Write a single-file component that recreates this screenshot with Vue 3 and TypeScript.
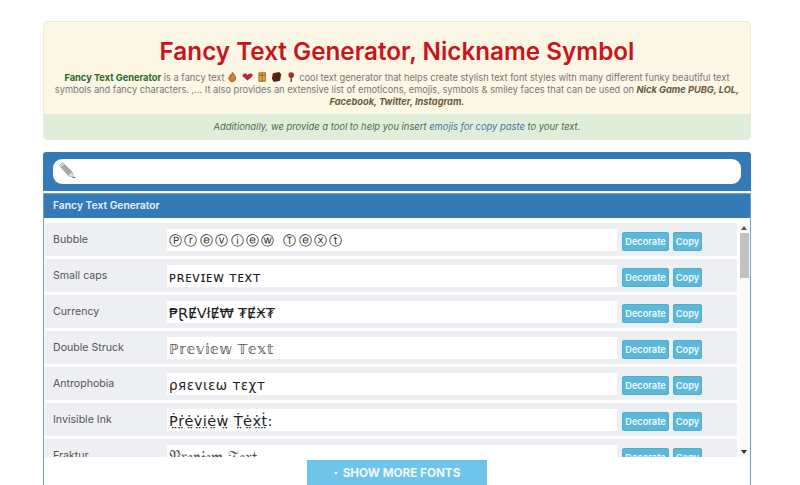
<script setup lang="ts">
interface FontRow { name: string; preview: string; cls: string }
const rows: FontRow[] = [
  { name: 'Bubble', preview: 'Ⓟⓡⓔⓥⓘⓔⓦ Ⓣⓔⓧⓣ', cls: 'bubble' },
  { name: 'Small caps', preview: 'ᴘʀᴇᴠɪᴇᴡ ᴛᴇxᴛ', cls: 'caps' },
  { name: 'Currency', preview: '₱ⱤɆVłɆ₩ ₮ɆӾ₮', cls: 'currency' },
  { name: 'Double Struck', preview: 'ℙ𝕣𝕖𝕧𝕚𝕖𝕨 𝕋𝕖𝕩𝕥', cls: 'struck' },
  { name: 'Antrophobia', preview: 'ρяεvιεω тεχт', cls: 'antro' },
  { name: 'Invisible Ink', preview: 'Ṗ̤ṙ̤ė̤v̤̇i̤̇ė̤ẇ̤ Ṫ̤ė̤ẋ̤ṫ̤:', cls: 'ink' },
  { name: 'Fraktur', preview: '𝔓𝔯𝔢𝔳𝔦𝔢𝔴 𝔗𝔢𝔵𝔱', cls: 'fraktur' },
]
</script>

<template>
  <main class="page">
    <section class="intro">
      <div class="intro-body">
        <h1>Fancy Text Generator, Nickname Symbol</h1>
        <p>
          <strong class="brand">Fancy Text Generator</strong> is a fancy text
          <span class="emojis">
            <svg viewBox="0 0 10 12"><path d="M5 .5C6 2.500 9 4 9 7.500 9 10 7 11.500 5 11.500S1 10 1 7.500C1 5.500 2.500 5 3 3 3.500 3.500 4 4 4.200 4.500 4.700 3 4.800 2 5 .5Z" fill="#d9822b" stroke="#7a3c10" stroke-width=".8"/></svg>
            <svg viewBox="0 0 13 12" class="wide"><path d="M6.500 10 1 5.500C0 3.500 2 1.500 4 2c1.200.3 2 1 2.500 1.800C7.500 2.500 9 1.500 11 2c2 .6 2 3 .5 4Z" fill="#b22a3a"/></svg>
            <svg viewBox="0 0 10 12"><path d="M1 1h8v10H1z" fill="#e8a33a" stroke="#7a4a10" stroke-width=".8"/><path d="M5 1v10M1 4h8" stroke="#7a4a10" stroke-width=".8"/></svg>
            <svg viewBox="0 0 12 12" class="wide"><path d="M2 2 9 .5 11 3 10 10 3 11.500 1 8Z" fill="#5a1f14"/></svg>
            <svg viewBox="0 0 10 12"><path d="M5 .5C8 .5 9 3 8 5.500 7 7 6 7.500 5 7.500S3 7 2 5.500C1 3 2 .5 5 .5Z" fill="#a8302a"/><path d="M5 7v5" stroke="#3e6b32" stroke-width="1.800"/></svg>
          </span>
          cool text generator that helps create stylish text font styles with many different funky beautiful text<br />
          symbols and fancy characters. ,... It also provides an extensive list of emoticons, emojis, symbols &amp; smiley faces that can be used on
          <strong><em>Nick Game PUBG, LOL,<br />Facebook, Twitter, Instagram.</em></strong>
        </p>
      </div>
      <div class="intro-foot">
        <em>Additionally, we provide a tool to help you insert <a href="#">emojis for copy paste</a> to your text.</em>
      </div>
    </section>

    <section class="input-panel">
      <div class="input-box">
        <svg class="pencil" viewBox="0 0 18 18" aria-hidden="true">
          <path d="M1.500 4.500 4.500 1.500 14 11l1.500 5-5-1.500Z" fill="#a9a9a9" stroke="#8f8f8f" stroke-width=".8"/>
          <path d="M1.500 4.500 4.500 1.500 6.300 3.300 3.300 6.300Z" fill="#d2d2d2"/>
          <path d="M10.500 14.500 14 11l1.500 5Z" fill="#e6e0cf"/>
          <path d="M14.500 16.500h3" stroke="#555" stroke-width=".8"/>
        </svg>
      </div>
    </section>

    <section class="fonts-panel">
      <header class="fonts-head">Fancy Text Generator</header>
      <div class="fonts-scroll">
        <div class="fonts-list">
          <div v-for="row in rows" :key="row.name" class="font-row">
            <span class="font-name">{{ row.name }}</span>
            <span class="preview" :class="row.cls">{{ row.preview }}</span>
            <button class="btn decorate" type="button">Decorate</button>
            <button class="btn" type="button">Copy</button>
          </div>
        </div>
        <div class="scrollbar" aria-hidden="true">
          <span class="arrow up"></span>
          <span class="thumb"></span>
          <span class="track"></span>
          <span class="arrow down"></span>
        </div>
      </div>
      <div class="more-wrap">
        <button class="more" type="button"><span class="caret"></span>SHOW MORE FONTS</button>
      </div>
    </section>
  </main>
</template>

<style>
html, body { margin: 0; background: #fff; overflow: hidden; }
</style>

<style scoped>
.page {
  width: 708px;
  height: 485px;
  margin-left: 43px;
  padding-top: 21px;
  box-sizing: border-box;
  overflow: hidden;
  font-family: Inter, "Liberation Sans", sans-serif;
  color: #666;
}
.intro {
  height: 119px;
  box-sizing: border-box;
  border: 1px solid #eee8d8;
  border-radius: 4px;
  background: #fcf6e4;
  overflow: hidden;
  display: flex;
  flex-direction: column;
}
.intro-body { flex: 1; text-align: center; }
h1 {
  margin: 15px 0 0;
  font-size: 24.250px;
  line-height: 30px;
  font-weight: 600;
  color: #c9141b;
}
p {
  margin: 4px 0 0;
  font-size: 9.250px;
  line-height: 12px;
  color: #777;
  white-space: nowrap;
}
.brand { color: #27692b; }
.emojis { display: inline-flex; gap: 5px; vertical-align: -2px; margin: 0 1px; }
.emojis svg { width: 8.500px; height: 12px; }
.emojis svg.wide { width: 11px; }
p em { color: #6a5a3c; }
.intro-foot {
  height: 25px;
  background: #dfeeda;
  text-align: center;
  font-size: 9.400px;
  line-height: 25px;
  color: #4d6b4a;
}
.intro-foot a { color: #3b78ab; text-decoration: none; }

.input-panel {
  margin-top: 12px;
  height: 39px;
  box-sizing: border-box;
  padding: 7px 10px 0;
  background: #337ab7;
  border-radius: 3px 3px 0 0;
}
.input-box {
  height: 25px;
  background: #fff;
  border-radius: 9px;
  padding: 2px 0 0 5px;
  box-sizing: border-box;
}
.pencil { display: block; width: 18px; height: 18px; }

.fonts-panel {
  margin-top: 2px;
  border: 1px solid #6f9fc6;
  border-bottom: 0;
  height: 292px;
  box-sizing: border-box;
  display: flex;
  flex-direction: column;
  background: #fff;
}
.fonts-head {
  height: 24px;
  flex: none;
  background: #337ab7;
  color: #e8f1f8;
  font-size: 10.300px;
  font-weight: 600;
  line-height: 22px;
  padding-left: 9px;
}
.fonts-scroll {
  height: 239px;
  flex: none;
  display: flex;
  padding: 5px 0 0 1px;
  box-sizing: border-box;
}
.fonts-list {
  flex: 1;
  overflow: hidden;
  display: flex;
  flex-direction: column;
  gap: 3px;
}
.font-row {
  flex: none;
  height: 33px;
  background: #eeeff3;
  display: flex;
  align-items: flex-start;
  box-sizing: border-box;
  padding-left: 8px;
}
.font-name {
  width: 114px;
  flex: none;
  font-size: 10.600px;
  line-height: 33px;
  color: #555;
}
.preview {
  width: 450px;
  height: 22px;
  margin-top: 6px;
  flex: none;
  background: #fff;
  line-height: 24px;
  padding-left: 2px;
  box-sizing: border-box;
  color: #222;
  font-family: "DejaVu Sans", sans-serif;
  font-size: 13px;
  white-space: nowrap;
  overflow: hidden;
}
.preview.bubble { font-size: 12.500px; letter-spacing: 2.400px; }
.preview.caps { font-size: 13.500px; letter-spacing: .4px; }
.preview.currency { font-size: 14.500px; letter-spacing: -.2px; }
.preview.struck { font-size: 14px; color: #555; letter-spacing: .5px; }
.preview.antro { font-size: 13.500px; letter-spacing: .5px; }
.preview.ink { font-size: 14.500px; letter-spacing: .4px; }
.preview.fraktur { font-size: 17px; color: #555; }
.btn {
  flex: none;
  height: 19px;
  margin: 9px 0 0 4px;
  padding: 0;
  width: 29px;
  border: 1px solid #4dafcf;
  border-radius: 2px;
  background: #5bb8d8;
  color: #f1fafd;
  font: 600 9.200px/17px Inter, "Liberation Sans", sans-serif;
}
.btn.decorate { width: 47px; margin-left: 5px; }
.scrollbar {
  width: 12px;
  flex: none;
  margin-left: 1px;
  display: flex;
  flex-direction: column;
  align-items: center;
  background: #fbfbfb;
}
.arrow { width: 0; height: 0; border: 3px solid transparent; margin: 3px 0; flex: none; }
.arrow.up { border-top: 0; border-bottom: 4px solid #555; }
.arrow.down { border-bottom: 0; border-top: 4px solid #333; }
.thumb { width: 9px; height: 45px; background: #c1c1c1; flex: none; }
.track { flex: 1; }
.more-wrap { flex: 1; padding: 3px 0 0 263px; }
.more {
  width: 180px;
  height: 26px;
  border: 0;
  padding: 0;
  background: #6fc5e9;
  color: #eef9fd;
  font: 700 11.700px/26px Inter, "Liberation Sans", sans-serif;
  display: flex;
  align-items: center;
  justify-content: center;
}
.caret {
  width: 0;
  height: 0;
  border: 2.500px solid transparent;
  border-bottom: 0;
  border-top: 3px solid #eef9fd;
  margin-right: 5px;
}
</style>
